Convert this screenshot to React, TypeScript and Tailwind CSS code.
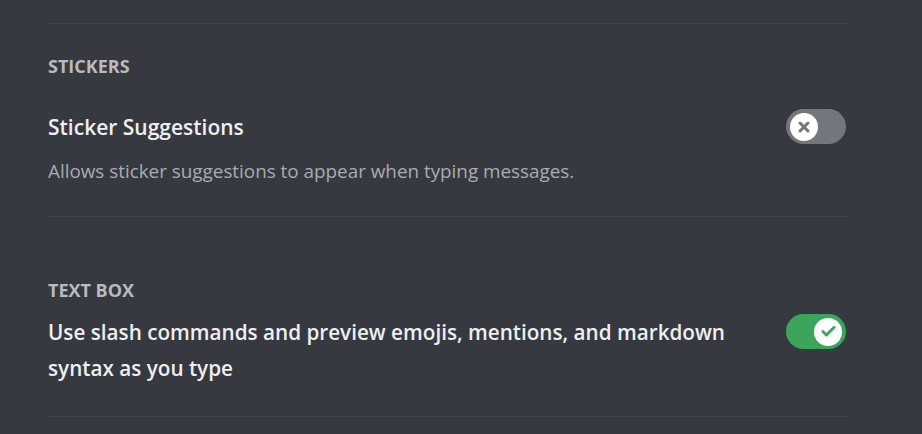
import { Check, X } from "lucide-react";

type ToggleProps = { on: boolean };

const Toggle = ({ on }: ToggleProps) => (
  <div
    className={`flex h-[35px] w-[60px] shrink-0 items-center rounded-full px-[4px] ${
      on ? "justify-end bg-[#3ba55c]" : "justify-start bg-[#72767d]"
    }`}
  >
    <div className="flex h-[28px] w-[28px] items-center justify-center rounded-full bg-white">
      {on ? (
        <Check className="h-[17px] w-[17px] text-[#3ba55c]" strokeWidth={4} />
      ) : (
        <X className="h-[16px] w-[16px] text-[#72767d]" strokeWidth={4.5} />
      )}
    </div>
  </div>
);

const Divider = () => <div className="h-px w-full bg-[#42454a]" />;

export default function App() {
  return (
    <div
      className="min-h-screen w-full bg-[#36393f] pl-[48px] pr-[76px]"
      style={{ fontFamily: '"Open Sans", "Noto Sans", sans-serif' }}
    >
      <div className="pt-[23px]">
        <Divider />
      </div>

      {/* Stickers */}
      <div className="pt-[32px]">
        <h2 className="text-[18px] font-bold uppercase leading-[20px] text-[#b9bbbe]">Stickers</h2>
        <div className="mt-[33px] flex items-center justify-between">
          <span className="text-[21px] font-semibold leading-[34px] text-[#eeeff1]">Sticker Suggestions</span>
          <Toggle on={false} />
        </div>
        <p className="mt-[15px] text-[18.85px] leading-[24px] text-[#a9acb0]">
          Allows sticker suggestions to appear when typing messages.
        </p>
        <div className="mt-[33px]">
          <Divider />
        </div>
      </div>

      {/* Text box */}
      <div className="pt-[63px]">
        <h2 className="text-[18px] font-bold uppercase leading-[20px] text-[#b9bbbe]">Text Box</h2>
        <div className="mt-[14px] flex items-start justify-between">
          <span className="max-w-[700px] text-[20.7px] font-semibold leading-[36px] text-[#eeeff1]">
            Use slash commands and preview emojis, mentions, and markdown syntax as you type
          </span>
          <Toggle on={true} />
        </div>
        <div className="mt-[30px]">
          <Divider />
        </div>
      </div>
    </div>
  );
}
